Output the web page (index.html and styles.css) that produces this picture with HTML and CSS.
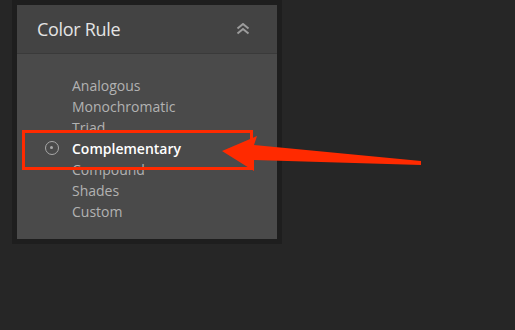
FILE: index.html
```html
<!DOCTYPE html>
<html lang="en">
  <head>
    <meta charset="UTF-8" />
    <title>Color Rule</title>
    <link rel="stylesheet" href="styles.css">
  </head>
  <body>
    <div class="frame">
      <section class="panel">
        <header class="panel-header">
          <h2 class="panel-title">Color Rule</h2>
          <button class="collapse" aria-label="Collapse">
            <svg width="14" height="12" viewBox="0 0 14 12">
              <path d="M1.5 5.5 L7 1 L12.5 5.5 M1.5 10.5 L7 6 L12.5 10.5" fill="none" stroke="currentColor" stroke-width="2" />
            </svg>
          </button>
        </header>
        <ul class="rules">
          <li class="rule">Analogous</li>
          <li class="rule">Monochromatic</li>
          <li class="rule">Triad</li>
          <li class="rule selected">
            <span class="radio"></span>
            Complementary
          </li>
          <li class="rule">Compound</li>
          <li class="rule">Shades</li>
          <li class="rule">Custom</li>
        </ul>
      </section>
    </div>

    <!-- annotation drawn over the screenshot -->
    <svg class="annotation" width="515" height="330" viewBox="0 0 515 330">
      <rect x="23.5" y="131.5" width="228" height="37" fill="none" stroke="#ff2a00" stroke-width="3" />
      <polygon points="222,151 257,136 254,145 421,161 421,165 254,160 254,171" fill="#ff2a00" />
    </svg>
  </body>
</html>
```

FILE: styles.css
```css
:root {
  --page-bg: #262626;
  --frame-bg: #1e1e1e;
  --header-bg: #434343;
  --panel-bg: #4a4a4a;
  --title-color: #e4e4e4;
  --item-color: #b2b2b2;
  --font-family: "Open Sans", "Liberation Sans", sans-serif;
}

body {
  margin: 0;
  background-color: var(--page-bg);
  font-family: var(--font-family);
  width: 515px;
  height: 330px;
  overflow: hidden;
  position: relative;
}

.frame {
  display: inline-block;
  margin-left: 12px;
  border: 5px solid var(--frame-bg);
}

.panel {
  width: 260px;
  background-color: var(--panel-bg);
}

.panel-header {
  display: flex;
  justify-content: space-between;
  align-items: center;
  height: 48px;
  padding: 0 27px 0 20px;
  background-color: var(--header-bg);
  border-bottom: 1px solid #3a3a3a;
}

.panel-title {
  margin: 0;
  font-size: 18px;
  font-weight: 400;
  color: var(--title-color);
  letter-spacing: -0.3px;
}

.collapse {
  background: none;
  border: none;
  padding: 0;
  color: #9c9c9c;
  display: flex;
  cursor: pointer;
}

.rules {
  list-style: none;
  margin: 0;
  padding: 21px 0 17px 55px;
}

.rule {
  position: relative;
  font-size: 14px;
  line-height: 21px;
  color: var(--item-color);
}

.rule.selected {
  color: #ffffff;
  font-weight: 600;
}

.radio {
  position: absolute;
  left: -27px;
  top: 3px;
  width: 14px;
  height: 14px;
  box-sizing: border-box;
  border: 1.5px solid #a8a8a8;
  border-radius: 50%;
}

.radio::after {
  content: "";
  position: absolute;
  width: 3px;
  height: 3px;
  border-radius: 50%;
  background-color: #a8a8a8;
  top: 4px;
  left: 4px;
}

.annotation {
  position: absolute;
  top: 0;
  left: 0;
  pointer-events: none;
}
```
